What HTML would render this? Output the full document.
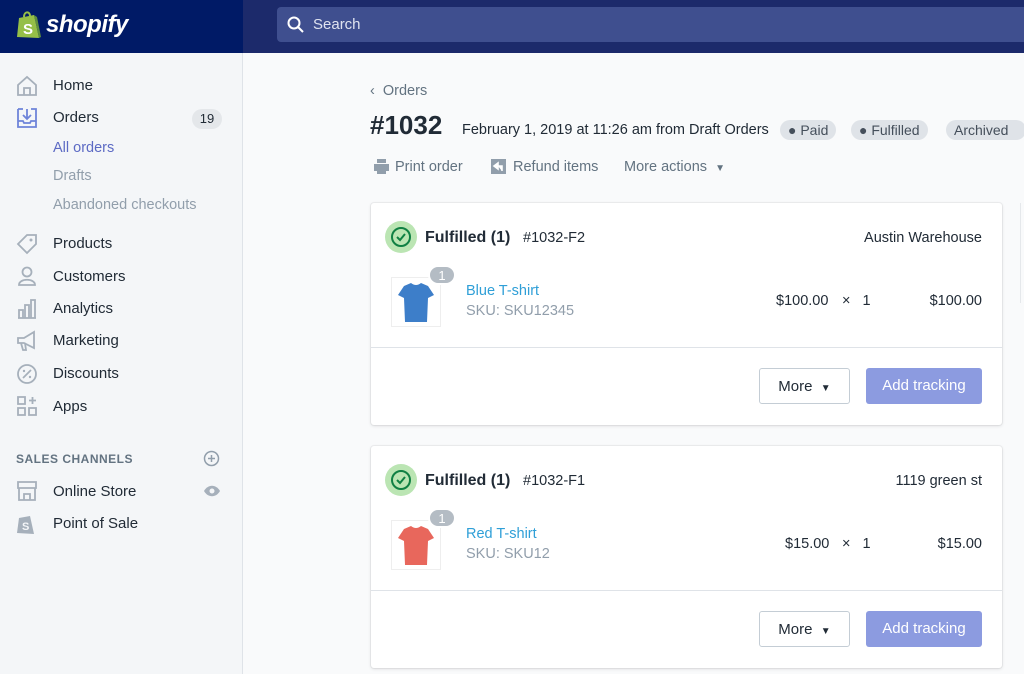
<!DOCTYPE html>
<html><head><style>
*{box-sizing:border-box;margin:0;padding:0}
body{width:1024px;height:674px;overflow:hidden;font-family:"Liberation Sans",sans-serif;background:#f9fafb;color:#212b36;position:relative;font-size:14.5px}
.top{position:absolute;left:0;top:0;width:1024px;height:53px;background:#1c2a6b}
.logo{position:absolute;left:0;top:0;width:243px;height:53px;background:#001a66}
.search{position:absolute;left:277px;top:7px;width:760px;height:35px;background:#3f4f8f;border-radius:4px;color:#dfe3f0;font-size:15px;padding:9px 0 0 36px}
.side{position:absolute;left:0;top:53px;width:243px;height:621px;background:#f4f6f8;border-right:1px solid #dfe3e8}
.ni{position:absolute;left:53px;font-size:15px;color:#212b36}
.sub{position:absolute;left:53px;font-size:14.5px;color:#919eab}
.ic{position:absolute;left:16px}
.card{position:absolute;left:371px;width:631px;background:#fff;border-radius:3px;box-shadow:0 0 0 1px rgba(63,63,68,.06),0 1px 3px rgba(63,63,68,.15)}
.t{position:absolute;white-space:nowrap}
.btn{position:absolute;height:36px;border-radius:3px;font-size:15px;text-align:center;line-height:36px}
.pill{position:absolute;top:120px;height:20px;border-radius:10px;background:#dfe3e8;color:#454f5b;font-size:14px;line-height:20px;padding:0 8px}
</style></head><body>
<div class="top"></div>
<div class="logo">
<svg style="position:absolute;left:16px;top:10px" width="26" height="30" viewBox="0 0 26 30"><path d="M3 8 L18 5 L23 28 L1 27 Z" fill="#95bf47"/><path d="M18 5 L23 28 L25 27 L21 7Z" fill="#5e8e3e"/><path d="M8 7 C8 1 14 1 14 6" stroke="#95bf47" stroke-width="2" fill="none"/><text x="7" y="24" font-size="15" font-weight="bold" fill="#fff" font-family="Liberation Sans">S</text></svg>
<div class="t" style="left:46px;top:11px;color:#fff;font-size:24px;font-weight:bold;font-style:italic;letter-spacing:-0.5px">shopify</div>
</div>
<div class="search"><svg style="position:absolute;left:10px;top:9px" width="17" height="17" viewBox="0 0 17 17"><circle cx="7" cy="7" r="5.5" stroke="#fff" stroke-width="2" fill="none"/><path d="M11 11l5 5" stroke="#fff" stroke-width="2"/></svg>Search</div>
<div class="side">
<svg class="ic" style="top:22px" width="22" height="22" viewBox="0 0 22 22"><path d="M2 10 L11 2 L20 10 V20 H2Z M8 20 V13 H14 V20" stroke="#a6b0bb" stroke-width="1.8" fill="none"/></svg>
<div class="ni" style="top:24px">Home</div>
<svg class="ic" style="top:54px" width="22" height="22" viewBox="0 0 22 22"><path d="M2 2 H7 M15 2 H20 V20 H2 V2 M2 14 H7 L8 16 H14 L15 14 H20 M11 2 V11 M7 8 L11 12 L15 8" stroke="#6e84d9" stroke-width="1.8" fill="none"/></svg>
<div class="ni" style="top:56px">Orders</div>
<div class="t" style="left:192px;top:56px;width:30px;height:20px;border-radius:10px;background:#e4e7ea;font-size:13px;text-align:center;line-height:20px">19</div>
<div class="sub" style="top:87px;color:#5c6ac4">All orders</div>
<div class="sub" style="top:115px">Drafts</div>
<div class="sub" style="top:144px">Abandoned checkouts</div>
<svg class="ic" style="top:180px" width="22" height="22" viewBox="0 0 22 22"><path d="M2 11 L11 2 H20 V11 L11 20Z" stroke="#a6b0bb" stroke-width="1.8" fill="none"/><circle cx="15" cy="7" r="1.5" fill="#a6b0bb"/></svg>
<div class="ni" style="top:182px">Products</div>
<svg class="ic" style="top:212px" width="22" height="22" viewBox="0 0 22 22"><circle cx="11" cy="7" r="4.5" stroke="#a6b0bb" stroke-width="1.8" fill="none"/><path d="M3 20 C3 13 19 13 19 20Z" stroke="#a6b0bb" stroke-width="1.8" fill="none"/></svg>
<div class="ni" style="top:215px">Customers</div>
<svg class="ic" style="top:245px" width="22" height="22" viewBox="0 0 22 22"><path d="M2 20 H20 M3 20 V12 H7 V20 M9 20 V7 H13 V20 M15 20 V2 H19 V20" stroke="#a6b0bb" stroke-width="1.8" fill="none"/></svg>
<div class="ni" style="top:247px">Analytics</div>
<svg class="ic" style="top:277px" width="22" height="22" viewBox="0 0 22 22"><path d="M2 8 H8 L18 2 V18 L8 13 H2Z M5 13 L7 20 H10 L9 13" stroke="#a6b0bb" stroke-width="1.8" fill="none"/></svg>
<div class="ni" style="top:279px">Marketing</div>
<svg class="ic" style="top:310px" width="22" height="22" viewBox="0 0 22 22"><circle cx="11" cy="11" r="9" stroke="#a6b0bb" stroke-width="1.8" fill="none"/><path d="M7 15 L15 7" stroke="#a6b0bb" stroke-width="1.8"/><circle cx="8" cy="8" r="1.2" fill="#a6b0bb"/><circle cx="14" cy="14" r="1.2" fill="#a6b0bb"/></svg>
<div class="ni" style="top:312px">Discounts</div>
<svg class="ic" style="top:342px" width="22" height="22" viewBox="0 0 22 22"><path d="M2 2 H9 V9 H2Z M2 13 H9 V20 H2Z M13 13 H20 V20 H13Z M16.5 2 V9 M13 5.5 H20" stroke="#a6b0bb" stroke-width="1.8" fill="none"/></svg>
<div class="ni" style="top:345px">Apps</div>
<div class="t" style="left:16px;top:399px;font-size:12px;font-weight:bold;color:#637381;letter-spacing:.5px">SALES CHANNELS</div>
<svg style="position:absolute;left:203px;top:397px" width="17" height="17" viewBox="0 0 17 17"><circle cx="8.5" cy="8.5" r="7" stroke="#919eab" stroke-width="1.5" fill="none"/><path d="M8.5 5V12M5 8.5H12" stroke="#919eab" stroke-width="1.5"/></svg>
<svg class="ic" style="top:427px" width="22" height="22" viewBox="0 0 22 22"><path d="M2 2 H20 V8 H2Z M3 8 V20 H19 V8 M8 20 V14 H14 V20" stroke="#a6b0bb" stroke-width="1.8" fill="none"/></svg>
<div class="ni" style="top:430px">Online Store</div>
<svg style="position:absolute;left:203px;top:432px" width="18" height="12" viewBox="0 0 18 12"><path d="M1 6 C5 -1 13 -1 17 6 C13 13 5 13 1 6Z" fill="#a6b0bb"/><circle cx="9" cy="6" r="2.5" fill="#f4f6f8"/></svg>
<svg class="ic" style="top:459px" width="22" height="24" viewBox="0 0 22 24"><path d="M3 6 L14 4 L18 22 L1 21Z" fill="#a6b0bb"/><text x="6" y="18" font-size="11" font-weight="bold" fill="#f4f6f8">S</text></svg>
<div class="ni" style="top:462px">Point of Sale</div>
</div>

<div class="t" style="left:370px;top:83px;color:#637381;font-size:14.5px">‹&nbsp; Orders</div>
<div class="t" style="left:370px;top:110px;font-size:26px;font-weight:bold;color:#212b36">#1032</div>
<div class="t" style="left:462px;top:122px;font-size:14.5px;color:#212b36">February 1, 2019 at 11:26 am from Draft Orders</div>
<div class="pill" style="left:780px">● Paid</div>
<div class="pill" style="left:851px">● Fulfilled</div>
<div class="pill" style="left:946px;width:80px">Archived</div>
<svg style="position:absolute;left:373px;top:158px" width="17" height="17" viewBox="0 0 17 17"><path d="M4 1H13V5H4Z M1 6H16V13H13V16H4V13H1Z" fill="#919eab"/></svg>
<div class="t" style="left:395px;top:159px;color:#637381">Print order</div>
<svg style="position:absolute;left:490px;top:158px" width="17" height="17" viewBox="0 0 17 17"><path d="M1 1H16V16H1Z" fill="#919eab"/><path d="M4 8 L8 5 V11Z M8 8H12V13" stroke="#fff" stroke-width="1.6" fill="#fff"/></svg>
<div class="t" style="left:513px;top:159px;color:#637381">Refund items</div>
<div class="t" style="left:624px;top:159px;color:#637381">More actions &nbsp;<span style="font-size:10px">▼</span></div>

<div class="card" style="top:203px;height:222px">
<div style="position:absolute;left:14px;top:18px;width:32px;height:32px;border-radius:16px;background:#bbe5b3"><svg width="32" height="32" viewBox="0 0 32 32"><circle cx="16" cy="16" r="9" stroke="#108043" stroke-width="2" fill="none"/><path d="M12 16 L15 19 L20 13" stroke="#108043" stroke-width="2" fill="none"/></svg></div>
<div class="t" style="left:54px;top:26px;font-size:16px;font-weight:bold;color:#212b36">Fulfilled (1)</div>
<div class="t" style="left:152px;top:27px;color:#212b36">#1032-F2</div>
<div class="t" style="right:20px;top:27px;color:#212b36">Austin Warehouse</div>
<div style="position:absolute;left:20px;top:74px;width:50px;height:50px;border:1px solid #eee"><svg width="48" height="48" viewBox="0 0 48 48"><path d="M12 8 L19 5 Q24 9 29 5 L36 8 L42 17 L36 20 L35 44 H13 L12 20 L6 17Z" fill="#3d7ec9"/></svg></div>
<div style="position:absolute;left:57px;top:62px;width:28px;height:20px;border-radius:10px;background:#b4bcc4;border:2px solid #fff;color:#fff;font-size:13px;text-align:center;line-height:17px">1</div>
<div class="t" style="left:95px;top:80px;color:#2f9fd7">Blue T-shirt</div>
<div class="t" style="left:95px;top:100px;color:#919eab">SKU: SKU12345</div>
<div class="t" style="left:405px;top:90px">$100.00</div>
<div class="t" style="left:471px;top:90px">×&nbsp;&nbsp;&nbsp;1</div>
<div class="t" style="right:20px;top:90px">$100.00</div>
<div style="position:absolute;left:0;right:0;top:144px;border-top:1px solid #dfe3e8"></div>
<div class="btn" style="left:388px;top:165px;width:91px;border:1px solid #c4cdd5;background:#fff;color:#212b36">More &nbsp;<span style="font-size:10px">▼</span></div>
<div class="btn" style="left:495px;top:165px;width:116px;background:#8c9be0;color:#fff">Add tracking</div>
</div>

<div class="card" style="top:446px;height:222px">
<div style="position:absolute;left:14px;top:18px;width:32px;height:32px;border-radius:16px;background:#bbe5b3"><svg width="32" height="32" viewBox="0 0 32 32"><circle cx="16" cy="16" r="9" stroke="#108043" stroke-width="2" fill="none"/><path d="M12 16 L15 19 L20 13" stroke="#108043" stroke-width="2" fill="none"/></svg></div>
<div class="t" style="left:54px;top:26px;font-size:16px;font-weight:bold;color:#212b36">Fulfilled (1)</div>
<div class="t" style="left:152px;top:27px;color:#212b36">#1032-F1</div>
<div class="t" style="right:20px;top:27px;color:#212b36">1119 green st</div>
<div style="position:absolute;left:20px;top:74px;width:50px;height:50px;border:1px solid #eee"><svg width="48" height="48" viewBox="0 0 48 48"><path d="M12 8 L19 5 Q24 9 29 5 L36 8 L42 17 L36 20 L35 44 H13 L12 20 L6 17Z" fill="#e8675c"/></svg></div>
<div style="position:absolute;left:57px;top:62px;width:28px;height:20px;border-radius:10px;background:#b4bcc4;border:2px solid #fff;color:#fff;font-size:13px;text-align:center;line-height:17px">1</div>
<div class="t" style="left:95px;top:80px;color:#2f9fd7">Red T-shirt</div>
<div class="t" style="left:95px;top:100px;color:#919eab">SKU: SKU12</div>
<div class="t" style="left:414px;top:90px">$15.00</div>
<div class="t" style="left:471px;top:90px">×&nbsp;&nbsp;&nbsp;1</div>
<div class="t" style="right:20px;top:90px">$15.00</div>
<div style="position:absolute;left:0;right:0;top:144px;border-top:1px solid #dfe3e8"></div>
<div class="btn" style="left:388px;top:165px;width:91px;border:1px solid #c4cdd5;background:#fff;color:#212b36">More &nbsp;<span style="font-size:10px">▼</span></div>
<div class="btn" style="left:495px;top:165px;width:116px;background:#8c9be0;color:#fff">Add tracking</div>
</div>
<div style="position:absolute;left:1020px;top:203px;width:4px;height:100px;border-left:1px solid #e5e8eb"></div>
</body></html>
